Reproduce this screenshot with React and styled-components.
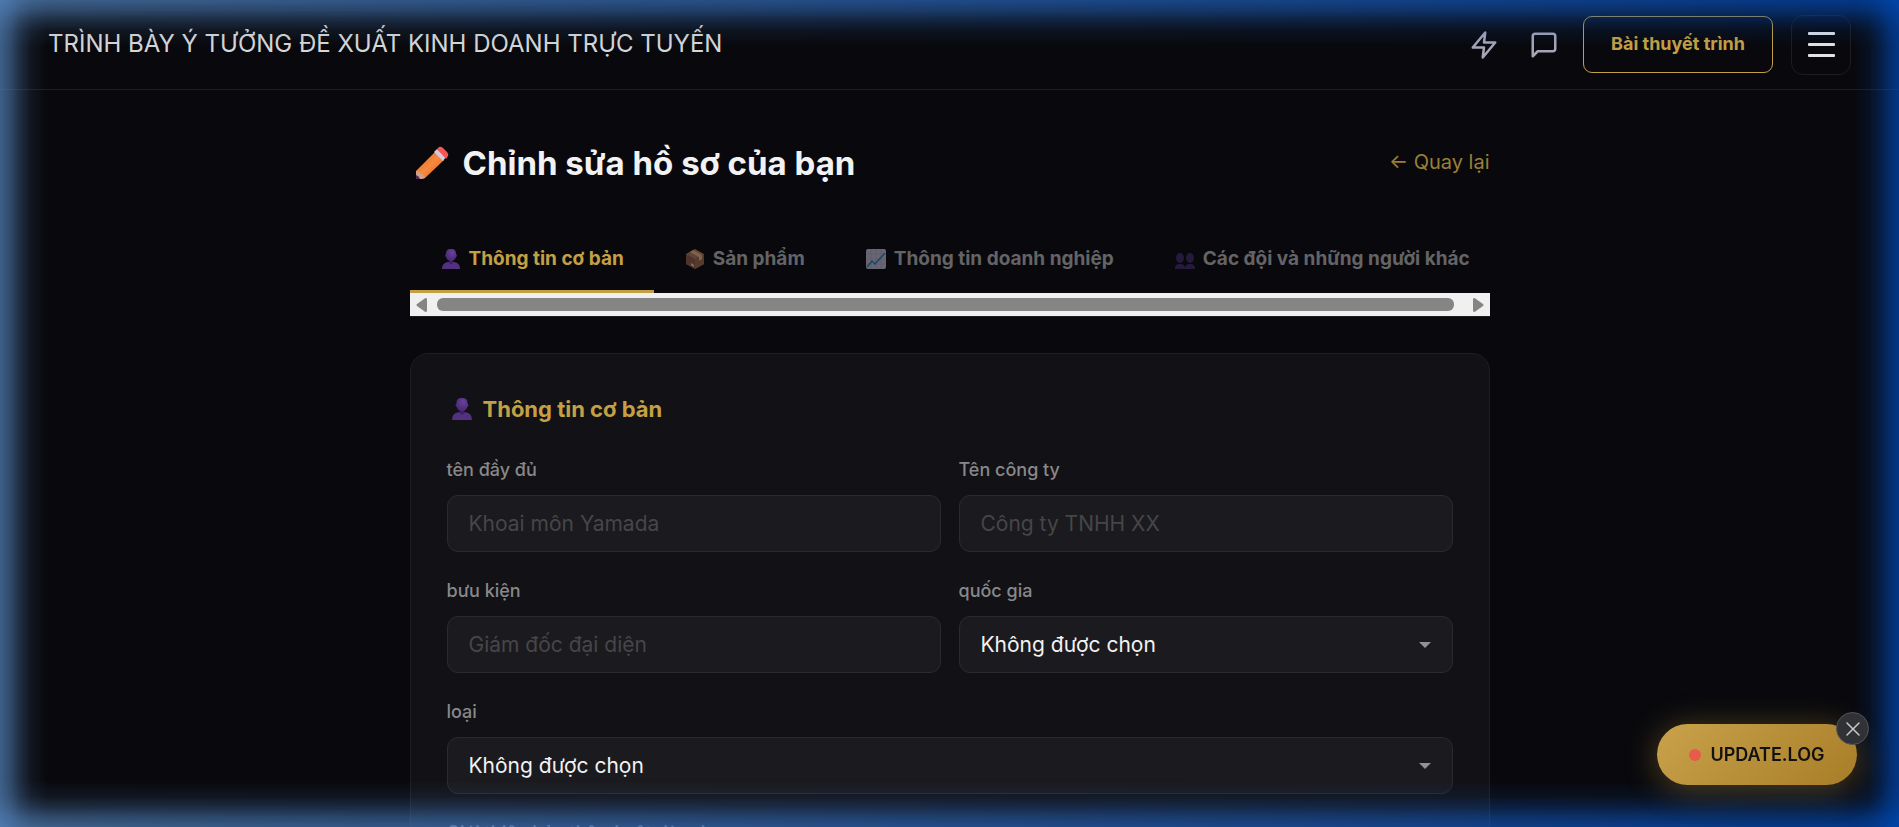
import React from "react";
import styled, { createGlobalStyle } from "styled-components";

const sans = `Inter, "Noto Sans", "Liberation Sans", sans-serif`;
const gold = "#c4a045";

const GlobalStyle = createGlobalStyle`
  *, *::before, *::after { box-sizing: border-box; }
  body { margin: 0; background: #09090d; font-family: ${sans}; color: #f2f2f2; }
  #root { height: 100vh; overflow: hidden; }
  button, input, select { font-family: inherit; }
  h1, h2 { margin: 0; }
`;

const Page = styled.div`
  min-height: 100%;
`;

const EdgeGlow = styled.div`
  position: fixed;
  inset: 0;
  pointer-events: none;
  z-index: 5;
  --fade: rgba(0, 0, 0, 0.7), rgba(0, 0, 0, 0.54) 10px, rgba(0, 0, 0, 0.3) 20px,
    rgba(0, 0, 0, 0.11) 31px, transparent 47px;
  background: linear-gradient(to right, #5484bc, #004ab8);
  mask-image: linear-gradient(to bottom, var(--fade)), linear-gradient(to top, var(--fade)),
    linear-gradient(to right, var(--fade)), linear-gradient(to left, var(--fade));
`;

const Header = styled.header`
  display: flex;
  align-items: center;
  justify-content: space-between;
  height: 90px;
  padding: 0 48px;
  border-bottom: 1px solid #1d1d20;
`;

const Brand = styled.div`
  padding-bottom: 2px;
  font-size: 24px;
  line-height: 30px;
  color: #d6d6d6;
`;

const Actions = styled.div`
  display: flex;
  align-items: center;
  gap: 18px;
`;

const IconGroup = styled.div`
  display: flex;
  gap: 18px;
`;

const IconButton = styled.button`
  display: grid;
  place-items: center;
  width: 42px;
  height: 42px;
  padding: 0;
  border: 0;
  background: none;
  color: #a5a5b8;
`;

const PitchButton = styled.button`
  height: 57px;
  padding: 0 27px 2px;
  border: 1px solid ${gold};
  border-radius: 9px;
  background: none;
  color: ${gold};
  font-size: 18px;
  font-weight: 700;
`;

const MenuButton = styled.button`
  display: flex;
  flex-direction: column;
  align-items: center;
  justify-content: center;
  gap: 8px;
  width: 60px;
  height: 60px;
  padding: 0;
  border: 1px solid #1d1d20;
  border-radius: 12px;
  background: none;
`;

const MenuLine = styled.span`
  width: 27px;
  height: 3px;
  border-radius: 1px;
  background: #e2e2e6;
`;

const Main = styled.main`
  max-width: 1080px;
  margin: 0 auto;
  padding-top: 48px;
`;

const TitleRow = styled.div`
  display: flex;
  align-items: center;
  justify-content: space-between;
  height: 48px;
  margin-bottom: 36px;
`;

const Title = styled.h1`
  display: flex;
  align-items: center;
  gap: 14px;
  padding: 2px 0 0 5px;
  font-size: 33px;
  line-height: 48px;
  font-weight: 700;
`;

const BackLink = styled.a`
  color: #9c7f37;
  font-size: 20px;
  line-height: 30px;
  text-decoration: none;
`;

const Tabs = styled.div`
  border-bottom: 1px solid #1d1d20;
  margin-bottom: 36px;
`;

const TabList = styled.div`
  display: flex;
  overflow-x: auto;
  scrollbar-width: none;
`;

const Tab = styled.button`
  display: flex;
  flex: none;
  align-items: center;
  gap: 8px;
  height: 71px;
  padding: 5px 30px 0 31px;
  border: 0;
  border-bottom: 3px solid ${(p) => (p.$active ? gold : "transparent")};
  background: none;
  color: ${(p) => (p.$active ? gold : "#646466")};
  font-size: 19px;
  font-weight: 700;
  white-space: nowrap;
`;

const TabIcon = styled.span`
  display: flex;
  opacity: ${(p) => (p.$dim ? 0.6 : 1)};
`;

const ScrollTrack = styled.div`
  display: flex;
  align-items: center;
  justify-content: space-between;
  gap: 10px;
  height: 23px;
  padding: 0 6px;
  background: #f0f0f0;
  color: #858585;
`;

const ScrollThumb = styled.div`
  flex: 1;
  height: 13px;
  margin-right: 9px;
  border-radius: 6px;
  background: #858585;
`;

const Card = styled.section`
  padding: 36px;
  border: 1px solid #1f1f22;
  border-radius: 18px;
  background: #121115;
`;

const CardTitle = styled.h2`
  display: flex;
  align-items: center;
  gap: 10px;
  margin-bottom: 27px;
  padding-left: 4px;
  color: ${gold};
  font-size: 22px;
  line-height: 38px;
  font-weight: 700;
`;

const FormGrid = styled.form`
  display: grid;
  grid-template-columns: 1fr 1fr;
  gap: 24px 18px;
`;

const Field = styled.div`
  display: flex;
  flex-direction: column;
  gap: 10px;
  grid-column: ${(p) => (p.$wide ? "1 / -1" : "auto")};
`;

const Label = styled.label`
  color: #88888a;
  font-size: 18px;
  line-height: 30px;
  font-weight: 500;
`;

const TextInput = styled.input`
  width: 100%;
  height: 57px;
  padding: 0 21px;
  border: 1px solid #2b2b2e;
  border-radius: 11px;
  background: #1b1a1e;
  color: #f2f2f2;
  font-size: 21px;
  &::placeholder { color: #464648; opacity: 1; }
`;

const SelectWrap = styled.div`
  display: grid;
  align-items: center;
  & > * { grid-area: 1 / 1; }
`;

const SelectBox = styled(TextInput).attrs({ as: "select" })`
  appearance: none;
`;

const SelectArrow = styled.svg`
  justify-self: end;
  margin-right: 22px;
  pointer-events: none;
`;

const UpdateDock = styled.div`
  position: fixed;
  right: 42px;
  bottom: 42px;
  z-index: 6;
`;

const UpdateButton = styled.button`
  display: flex;
  align-items: center;
  justify-content: center;
  gap: 9px;
  width: 200px;
  height: 61px;
  padding: 0;
  border: 0;
  border-radius: 31px;
  background: linear-gradient(135deg, #c9a24b, #a87d28);
  box-shadow: 0 4px 32px rgba(196, 152, 60, 0.4);
  color: #111;
  font-size: 18px;
  font-weight: 600;
`;

const StatusDot = styled.span`
  width: 12px;
  height: 12px;
  border-radius: 50%;
  background: #e85a4a;
`;

const CloseButton = styled.button`
  position: absolute;
  top: -12px;
  right: -12px;
  display: grid;
  place-items: center;
  width: 33px;
  height: 33px;
  padding: 0;
  border: 1px solid #55555a;
  border-radius: 50%;
  background: #303236;
  color: #c8c8c8;
`;

const ZapIcon = () => (
  <svg width="30" height="30" viewBox="0 0 24 24" fill="none" stroke="currentColor" strokeWidth="2" strokeLinecap="round" strokeLinejoin="round">
    <path d="M13 2 3 14h9l-1 8 10-12h-9z" />
  </svg>
);

const MessageIcon = () => (
  <svg width="30" height="30" viewBox="0 0 24 24" fill="none" stroke="currentColor" strokeWidth="2" strokeLinecap="round" strokeLinejoin="round">
    <path d="M21 15a2 2 0 0 1-2 2H7l-4 4V5a2 2 0 0 1 2-2h14a2 2 0 0 1 2 2z" />
  </svg>
);

const PencilIcon = () => (
  <svg width="34" height="34" viewBox="0 0 34 34">
    <defs>
      <linearGradient id="pencilBody" x1="0" y1="0" x2="1" y2="1">
        <stop offset="0" stopColor="#e0672c" />
        <stop offset=".5" stopColor="#f58a3c" />
        <stop offset="1" stopColor="#e8552f" />
      </linearGradient>
    </defs>
    <path d="M1 25 20 6l9 8L10 32l-5 1z" fill="url(#pencilBody)" />
    <path d="m19 6 3-3 9 8-3 4z" fill="#cfcbe6" />
    <path d="m22 3 2-2q2-1 4 1l4 4q2 2 1 4l-2 3z" fill="#f4574f" />
    <path d="M1 25q4 0 5 3 3 0 4 4l-3 1H1z" fill="#cfa08c" />
    <path d="M1 29q3 1 4 4H1z" fill="#4c2c50" />
  </svg>
);

const PersonIcon = ({ size }) => (
  <svg width={size} height={size} viewBox="0 0 20 20">
    <defs>
      <radialGradient id="personHead" cx=".6" cy=".3" r=".8">
        <stop offset="0" stopColor="#6a419c" />
        <stop offset="1" stopColor="#41256c" />
      </radialGradient>
    </defs>
    <path d="M1 20c0-5 3-7 7-7h4c4 0 7 2 7 7z" fill="#53317f" />
    <path d="M8 11h4v3q-2 2-4 0z" fill="#3b2163" />
    <path d="M10 0c4 0 5 2 5 5 1 0 1 3 0 3-1 3-3 4-5 4s-4-1-5-4c-1 0-1-3 0-3 0-3 1-5 5-5z" fill="url(#personHead)" />
  </svg>
);

const BoxIcon = () => (
  <svg width="20" height="20" viewBox="0 0 20 20">
    <path d="m10 0 9 5v10l-9 5-9-5V5z" fill="#9d6b4e" />
    <path d="m1 5 9 5v10l-9-5z" fill="#7c4f3b" />
    <path d="m10 10 9-5v10l-9 5z" fill="#8c5b42" />
    <path d="m5 3 9 5v4l3-2V6L8 1z" fill="#caa07c" />
    <path d="m6 14 3 2v2l-3-2z" fill="#c9b8c4" />
  </svg>
);

const ChartIcon = () => (
  <svg width="20" height="20" viewBox="0 0 20 20">
    <rect width="20" height="20" rx="2" fill="#aaa4b6" />
    <path d="M0 5h20M0 10h20M0 15h20M5 0v20M10 0v20M15 0v20" stroke="#9a94a8" />
    <path d="m1 18 5-6 3 3L19 4" fill="none" stroke="#1c6fb0" strokeWidth="1.5" />
  </svg>
);

const PeopleIcon = () => (
  <svg width="20" height="20" viewBox="0 0 20 20">
    <g fill="#38245c">
      <ellipse cx="5" cy="9" rx="4" ry="5" />
      <ellipse cx="15" cy="9" rx="4" ry="5" />
      <path d="M0 20c0-4 2-5 5-5s5 1 5 5zM10 20c0-4 2-5 5-5s5 1 5 5z" />
    </g>
  </svg>
);

const tabs = [
  { label: "Thông tin cơ bản", icon: <PersonIcon size={20} />, active: true },
  { label: "Sản phẩm", icon: <BoxIcon /> },
  { label: "Thông tin doanh nghiệp", icon: <ChartIcon /> },
  { label: "Các đội và những người khác", icon: <PeopleIcon /> },
];

const fields = [
  { id: "name", label: "tên đầy đủ", placeholder: "Khoai môn Yamada" },
  { id: "company", label: "Tên công ty", placeholder: "Công ty TNHH XX" },
  { id: "position", label: "bưu kiện", placeholder: "Giám đốc đại diện" },
  { id: "country", label: "quốc gia", select: true },
  { id: "kind", label: "loại", select: true, wide: true },
  { id: "intro", label: "Giới thiệu bản thân (một dòng)", wide: true },
];

const FormField = ({ id, label, placeholder, select, wide }) => (
  <Field $wide={wide}>
    <Label htmlFor={id}>{label}</Label>
    {select ? (
      <SelectWrap>
        <SelectBox id={id}>
          <option>Không được chọn</option>
        </SelectBox>
        <SelectArrow width="12" height="6" viewBox="0 0 12 6">
          <path d="M0 0h12L6 6z" fill="#929294" />
        </SelectArrow>
      </SelectWrap>
    ) : (
      <TextInput id={id} type="text" placeholder={placeholder} />
    )}
  </Field>
);

export default function App() {
  return (
    <Page>
      <GlobalStyle />
      <Header>
        <Brand>TRÌNH BÀY Ý TƯỞNG ĐỀ XUẤT KINH DOANH TRỰC TUYẾN</Brand>
        <Actions>
          <IconGroup>
            <IconButton aria-label="Hoạt động"><ZapIcon /></IconButton>
            <IconButton aria-label="Tin nhắn"><MessageIcon /></IconButton>
          </IconGroup>
          <PitchButton>Bài thuyết trình</PitchButton>
          <MenuButton aria-label="Menu">
            <MenuLine />
            <MenuLine />
            <MenuLine />
          </MenuButton>
        </Actions>
      </Header>
      <Main>
        <TitleRow>
          <Title><PencilIcon />Chỉnh sửa hồ sơ của bạn</Title>
          <BackLink href="#">← Quay lại</BackLink>
        </TitleRow>
        <Tabs>
          <TabList role="tablist">
            {tabs.map((t) => (
              <Tab key={t.label} role="tab" aria-selected={!!t.active} $active={t.active}>
                <TabIcon $dim={!t.active}>{t.icon}</TabIcon>
                {t.label}
              </Tab>
            ))}
          </TabList>
          <ScrollTrack>
            <svg width="11" height="14" viewBox="0 0 11 14"><path d="M11 1v12q-1 2-3 0L1 8q-1-1 0-2l7-5q2-2 3 0z" fill="currentColor" /></svg>
            <ScrollThumb />
            <svg width="11" height="14" viewBox="0 0 11 14"><path d="M0 1v12q1 2 3 0l7-5q1-1 0-2L3 1q-2-2-3 0z" fill="currentColor" /></svg>
          </ScrollTrack>
        </Tabs>
        <Card>
          <CardTitle><PersonIcon size={22} />Thông tin cơ bản</CardTitle>
          <FormGrid>
            {fields.map((f) => <FormField key={f.id} {...f} />)}
          </FormGrid>
        </Card>
      </Main>
      <EdgeGlow />
      <UpdateDock>
        <UpdateButton><StatusDot />UPDATE.LOG</UpdateButton>
        <CloseButton aria-label="Đóng">
          <svg width="14" height="14" viewBox="0 0 14 14" stroke="currentColor" strokeWidth="1.5" strokeLinecap="round"><path d="m1 1 12 12M13 1 1 13" /></svg>
        </CloseButton>
      </UpdateDock>
    </Page>
  );
}
